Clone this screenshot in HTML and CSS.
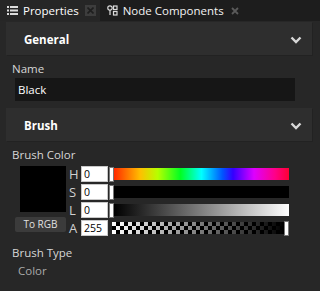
FILE: index.html
```html
<!DOCTYPE html>
<html>
<head>
<meta charset="utf-8">
<link rel="stylesheet" href="styles.css">
</head>
<body>
<div class="tabs">
  <div class="tab active">
    <svg class="ico" width="11" height="9" viewBox="0 0 11 9"><rect x="0" y="0" width="2" height="2" fill="#ddd"/><rect x="3" y="0" width="8" height="2" fill="#ddd"/><rect x="0" y="3.5" width="2" height="2" fill="#ddd"/><rect x="3" y="3.5" width="8" height="2" fill="#ddd"/><rect x="0" y="7" width="2" height="2" fill="#ddd"/><rect x="3" y="7" width="8" height="2" fill="#ddd"/></svg>
    <span class="tab-title">Properties</span>
    <span class="close boxed"><svg width="7" height="7" viewBox="0 0 7 7"><path d="M0.5 0.5L6.5 6.5M6.5 0.5L0.5 6.5" stroke="#1e1e1e" stroke-width="1.6"/></svg></span>
  </div>
  <div class="tab">
    <svg class="ico" width="11" height="11" viewBox="0 0 11 11"><circle cx="3" cy="3" r="2.2" fill="none" stroke="#ddd" stroke-width="1.2"/><rect x="2.4" y="5" width="1.2" height="5" fill="#ddd"/><rect x="6.5" y="1" width="3.5" height="3.5" fill="none" stroke="#ddd" stroke-width="1.2"/><rect x="6.5" y="6.5" width="3.5" height="3.5" fill="none" stroke="#ddd" stroke-width="1.2"/></svg>
    <span class="tab-title">Node Components</span>
    <span class="close"><svg width="8" height="8" viewBox="0 0 8 8"><path d="M1 1L7 7M7 1L1 7" stroke="#5a5a5a" stroke-width="1.8"/></svg></span>
  </div>
</div>
<div class="panel">
  <div class="section">
    <span>General</span>
    <svg class="chev" width="12" height="8" viewBox="0 0 12 8"><path d="M1.5 1.5L6 6L10.5 1.5" fill="none" stroke="#d8d8d8" stroke-width="2.4"/></svg>
  </div>
  <div class="label">Name</div>
  <div class="textbox">Black</div>
  <div class="section">
    <span>Brush</span>
    <svg class="chev" width="12" height="8" viewBox="0 0 12 8"><path d="M1.5 1.5L6 6L10.5 1.5" fill="none" stroke="#d8d8d8" stroke-width="2.4"/></svg>
  </div>
  <div class="label">Brush Color</div>
  <div class="picker">
    <div class="left">
      <div class="swatch"></div>
      <div class="btn">To RGB</div>
    </div>
    <div class="rows">
      <div class="row"><span class="ch">H</span><span class="num">0</span><span class="handle"></span><span class="bar hue"></span></div>
      <div class="row"><span class="ch">S</span><span class="num">0</span><span class="handle"></span><span class="bar sat"></span></div>
      <div class="row"><span class="ch">L</span><span class="num">0</span><span class="handle"></span><span class="bar lum"></span></div>
      <div class="row"><span class="ch">A</span><span class="num">255</span><span class="bar alpha"></span><span class="handle"></span></div>
    </div>
  </div>
  <div class="label type">Brush Type</div>
  <div class="value">Color</div>
</div>
</body>
</html>
```
FILE: styles.css
```css
html, body {
  margin: 0;
  padding: 0;
  background: #272727;
  font-family: "Open Sans", "Noto Sans", sans-serif;
  font-size: 11.5px;
  color: #dcdcdc;
  width: 320px;
  height: 291px;
  overflow: hidden;
}
.tabs {
  display: flex;
  height: 21px;
  background: #1d1d1d;
}
.tab {
  display: flex;
  align-items: center;
  padding: 0 6px 0 7px;
  height: 21px;
}
.tab.active {
  background: #262626;
  padding-right: 4px;
}
.tab .ico { margin-right: 5px; }
.tab-title {
  font-size: 11.5px;
  color: #f2f2f2;
  line-height: 21px;
}
.tab.active .tab-title { color: #ffffff; }
.close {
  display: flex;
  align-items: center;
  justify-content: center;
  width: 11px;
  height: 11px;
  margin-left: 6px;
}
.close.boxed {
  background: #3d3d3d;
}
.panel {
  padding-top: 1px;
}
.section {
  display: flex;
  align-items: center;
  justify-content: space-between;
  height: 33px;
  margin: 0 8px 0 6px;
  padding: 2px 10px 0 18px;
  box-sizing: border-box;
  background: #2e2e2e;
  box-shadow: 1px 1px 0 #222;
  font-weight: bold;
  font-size: 11.5px;
  color: #ffffff;
}
.label {
  margin: 5px 0 0 12px;
  height: 17px;
  line-height: 17px;
  color: #d6d6d6;
}
.textbox {
  margin: 1px 25px 7px 15px;
  height: 23px;
  line-height: 23px;
  padding-left: 3px;
  background: #161616;
  color: #ffffff;
}
.picker {
  display: flex;
  margin: 3px 0 0 15px;
}
.left {
  display: flex;
  flex-direction: column;
  align-items: flex-end;
  width: 51px;
}
.swatch {
  width: 46px;
  height: 46px;
  background: #000;
}
.btn {
  margin-top: 5px;
  width: 51px;
  height: 15px;
  line-height: 15px;
  text-align: center;
  background: #3b3b3b;
  border-radius: 2px;
  font-size: 10px;
  color: #e0e0e0;
  align-self: flex-start;
}
.rows {
  display: flex;
  flex-direction: column;
  gap: 2px;
  margin-left: 3px;
}
.row {
  display: flex;
  align-items: center;
  height: 16px;
}
.ch {
  width: 12px;
  font-size: 13px;
  color: #d0d0d0;
}
.num {
  width: 27px;
  height: 16px;
  line-height: 14px;
  background: #fff;
  border: 1px solid #c8c8c8;
  color: #000;
  font-size: 10.5px;
  padding-left: 2px;
  box-sizing: border-box;
  margin-right: 1px;
}
.handle {
  width: 5px;
  height: 15px;
  background: #fff;
  border: 1px solid #777;
  box-sizing: border-box;
}
.bar {
  width: 175px;
  height: 12px;
}
.hue {
  background: linear-gradient(to right, #ff2a00, #ffbf00 15%, #b6ff00 25%, #00ff22 38%, #00ffff 50%, #0055ff 62%, #3300ff 68%, #dd00ff 80%, #ff0088 92%, #ff0033);
}
.sat { background: #000; }
.lum { background: linear-gradient(to right, #000, #fff); }
.alpha {
  width: 172px;
  margin-left: 3px;
  background-color: #fff;
  background-image:
    linear-gradient(to right, rgba(0,0,0,0), #000),
    conic-gradient(#000 25%, #fff 0 50%, #000 0 75%, #fff 0);
  background-size: 100% 100%, 8px 8px;
}
.type { margin-top: 8px; }
.value {
  margin: 2px 0 0 18px;
  color: #a9a9a9;
}
```
